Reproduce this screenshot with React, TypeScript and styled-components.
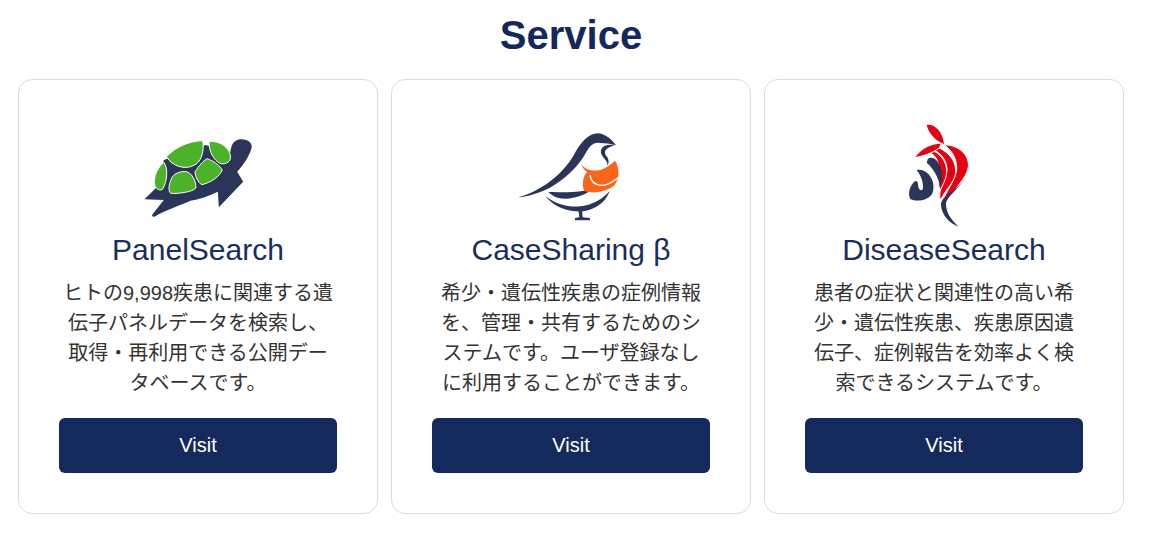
import styled, { createGlobalStyle } from 'styled-components'

const Global = createGlobalStyle`
  body {
    margin: 0;
    background: #fff;
    font-family: "Liberation Sans", "Noto Sans CJK JP", sans-serif;
  }
`

const NAVY = '#2a3558'

function TurtleLogo() {
  return (
    <svg width="135" height="100" viewBox="1.5 0 405 300">
      <path
        fill={NAVY}
        d="M42 238 L80 200 L100 120 L225 75 L300 95 C302 72 312 60 328 58 C350 56 368 68 363 85 C358 105 340 135 320 155 L338 185 L265 262 L262 215 C235 228 205 238 180 242 C150 255 105 270 72 290 C66 292 63 288 66 283 L100 240 Z"
      />
      <g fill="#4cb227" stroke="#fff" strokeWidth="3" strokeLinejoin="round">
        <path d="M108 110 C135 80 180 62 217 62 C222 100 210 128 190 136 C165 150 125 140 108 110 Z" />
        <path d="M236 64 C270 62 300 85 300 112 C300 130 278 134 268 130 C250 120 234 95 236 64 Z" />
        <path d="M100 127 C114 145 110 185 96 208 C85 214 72 204 72 190 C70 165 82 143 100 127 Z" />
        <path d="M122 178 C128 160 150 153 168 155 C186 160 197 185 196 204 C188 216 140 222 121 220 C112 212 115 195 122 178 Z" />
        <path d="M230 116 C248 122 270 138 275 150 C268 170 240 188 214 194 C204 190 192 166 194 155 C205 138 218 122 230 116 Z" />
      </g>
    </svg>
  )
}

function BirdLogo() {
  return (
    <svg width="130" height="110" viewBox="3 0 390 330">
      <g fill={NAVY}>
        <path d="M40 232 C110 212 170 165 205 108 C228 65 250 40 280 40 C302 42 322 60 333 76 C315 70 300 70 285 69 C268 66 255 75 242 100 C220 140 180 178 135 203 C100 220 70 229 40 232 Z" />
        <path d="M328 76 C300 70 285 83 288 100 C293 116 310 122 307 137 C316 125 308 112 302 105 C295 92 305 84 328 76 Z" />
        <path d="M130 216 C165 214 205 222 258 208 C244 226 200 240 165 235 C150 232 140 226 130 216 Z" />
        <path d="M120 227 C150 252 190 262 225 259 C260 255 290 240 314 213 C302 250 265 270 235 274 C190 277 145 260 120 227 Z" />
        <path d="M220 268 L231 268 L233 292 L255 294 L255 301 L210 301 L210 294 L223 292 Z" />
      </g>
      <path
        fill="#f9661b"
        d="M228 132 C245 155 285 165 330 122 C343 140 346 175 328 196 C302 218 260 222 237 212 C230 190 235 168 246 156 C238 150 232 142 228 132 Z"
      />
      <path
        fill="none"
        stroke="#fff"
        strokeWidth="4"
        d="M255 165 C258 185 270 197 295 196 C310 195 325 185 341 172"
      />
    </svg>
  )
}

function ZebraLogo() {
  return (
    <svg width="88" height="110" viewBox="0 0 264 330">
      <g fill="#e60012" stroke="#fff" strokeWidth="3" strokeLinejoin="round">
        <path d="M80 15 C100 10 128 32 132 72 C105 62 86 40 80 15 Z" stroke="none" />
        <path d="M133 74 C178 76 208 105 205 140 C200 178 162 202 128 264 C116 240 162 195 170 150 C172 115 155 92 133 74 Z" />
        <path d="M116 83 C148 98 170 125 167 160 C162 190 132 212 122 242 C110 212 138 185 141 150 C141 125 128 105 106 92 Z" />
        <path d="M103 94 C128 106 144 135 139 165 C136 180 130 194 120 210 C110 185 120 160 116 135 C111 115 103 105 93 100 Z" />
        <path d="M44 113 C62 85 95 69 124 70 L118 84 C95 100 70 108 44 113 Z" />
      </g>
      <g fill={NAVY}>
        <path d="M84 116 C108 102 136 145 122 200 C116 180 106 150 80 128 Z" />
        <path d="M50 150 C85 142 112 190 96 222 C84 242 50 246 32 238 C22 225 28 195 46 183 C54 181 54 192 55 200 C57 212 68 214 69 204 C70 185 62 165 50 150 Z" />
        <path d="M192 176 C172 215 137 228 138 255 C140 285 160 305 176 320 C150 312 124 284 123 255 C123 225 170 215 192 176 Z" />
      </g>
    </svg>
  )
}

const services = [
  {
    name: 'PanelSearch',
    logo: <TurtleLogo />,
    text: 'ヒトの9,998疾患に関連する遺伝子パネルデータを検索し、取得・再利用できる公開データベースです。',
  },
  {
    name: 'CaseSharing β',
    logo: <BirdLogo />,
    text: '希少・遺伝性疾患の症例情報を、管理・共有するためのシステムです。ユーザ登録なしに利用することができます。',
  },
  {
    name: 'DiseaseSearch',
    logo: <ZebraLogo />,
    text: '患者の症状と関連性の高い希少・遺伝性疾患、疾患原因遺伝子、症例報告を効率よく検索できるシステムです。',
  },
]

export default function App() {
  return (
    <Page>
      <Global />
      <Heading>Service</Heading>
      <CardGrid>
        {services.map((s) => (
          <Card key={s.name}>
            <Logo>{s.logo}</Logo>
            <Name>{s.name}</Name>
            <Description>{s.text}</Description>
            <VisitButton>Visit</VisitButton>
          </Card>
        ))}
      </CardGrid>
    </Page>
  )
}

const Page = styled.div`
  width: 1106px;
  margin-left: 18px;
`

const Heading = styled.h2`
  margin: 0 0 19px;
  padding-top: 10px;
  font-size: 40px;
  line-height: 50px;
  font-weight: 700;
  color: #13295b;
  text-align: center;
`

const CardGrid = styled.div`
  display: grid;
  grid-template-columns: repeat(3, 360px);
  gap: 13px;
`

const Card = styled.div`
  box-sizing: border-box;
  height: 435px;
  padding: 40px;
  border: 1px solid #dcdcdc;
  border-radius: 14px;
  display: flex;
  flex-direction: column;
  align-items: center;
`

const Logo = styled.div`
  height: 110px;
  display: flex;
  justify-content: center;

  svg {
    display: block;
    flex: none;
  }
`

const Name = styled.div`
  font-size: 30px;
  line-height: 40px;
  color: #1a2e5c;
  white-space: nowrap;
`

const Description = styled.p`
  margin: 8px 0 20px;
  width: 272px;
  font-size: 20px;
  line-height: 30px;
  color: #333;
  text-align: center;
`

const VisitButton = styled.button`
  width: 278px;
  height: 55px;
  flex: none;
  border: 0;
  border-radius: 6px;
  background: #142a5c;
  color: #fff;
  font: 20px "Liberation Sans", sans-serif;
  cursor: pointer;
`
